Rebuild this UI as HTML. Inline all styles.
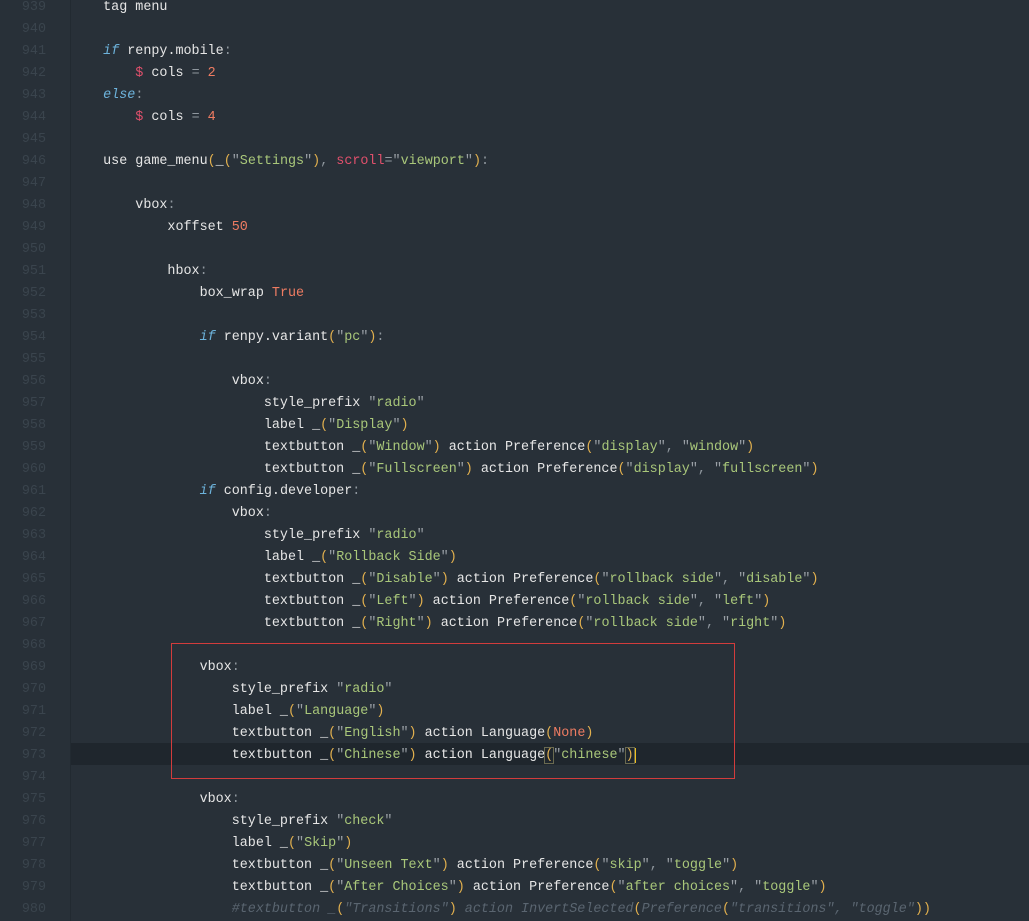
<!DOCTYPE html><html><head><style>
body{margin:0;width:1029px;height:921px;background:#283038;overflow:hidden;position:relative;font-family:"Liberation Mono",monospace;font-size:13.4px;}
.l{position:absolute;left:0;height:22px;line-height:22px;width:1029px;white-space:pre;color:#e6e6e6}
.n{position:absolute;left:0;width:46px;text-align:right;color:#3a444d}
.t{position:absolute;left:71px}
.k{color:#6db3dc;font-style:italic}.s{color:#a9c77a}.q{color:#9aa0a6}.p{color:#e2b04e}.m{color:#ef7c62}.d{color:#e0506c}.c{color:#5a6570;font-style:italic}.g{color:#8f979e}
</style></head><body>
<div style="position:absolute;left:70px;top:0;width:1px;height:921px;background:#222a31"></div>
<div style="position:absolute;left:71px;top:743px;width:958px;height:22px;background:#1f262d"></div>
<div style="position:absolute;left:171px;top:643px;width:562px;height:134px;border:1px solid #d23c3c"></div>
<div style="position:absolute;left:0;top:2px">
<div class="l" style="top:-5px"><span class="n">939</span><span class="t">    tag menu</span></div>
<div class="l" style="top:17px"><span class="n">940</span></div>
<div class="l" style="top:39px"><span class="n">941</span><span class="t">    <span class="k">if</span> renpy.mobile<span class="g">:</span></span></div>
<div class="l" style="top:61px"><span class="n">942</span><span class="t">        <span class="d">$</span> cols <span class="g">=</span> <span class="m">2</span></span></div>
<div class="l" style="top:83px"><span class="n">943</span><span class="t">    <span class="k">else</span><span class="g">:</span></span></div>
<div class="l" style="top:105px"><span class="n">944</span><span class="t">        <span class="d">$</span> cols <span class="g">=</span> <span class="m">4</span></span></div>
<div class="l" style="top:127px"><span class="n">945</span></div>
<div class="l" style="top:149px"><span class="n">946</span><span class="t">    use game_menu<span class="p">(</span>_<span class="p">(</span><span class="q">"</span><span class="s">Settings</span><span class="q">"</span><span class="p">)</span><span class="g">,</span> <span class="d">scroll</span><span class="g">=</span><span class="q">"</span><span class="s">viewport</span><span class="q">"</span><span class="p">)</span><span class="g">:</span></span></div>
<div class="l" style="top:171px"><span class="n">947</span></div>
<div class="l" style="top:193px"><span class="n">948</span><span class="t">        vbox<span class="g">:</span></span></div>
<div class="l" style="top:215px"><span class="n">949</span><span class="t">            xoffset <span class="m">50</span></span></div>
<div class="l" style="top:237px"><span class="n">950</span></div>
<div class="l" style="top:259px"><span class="n">951</span><span class="t">            hbox<span class="g">:</span></span></div>
<div class="l" style="top:281px"><span class="n">952</span><span class="t">                box_wrap <span class="m">True</span></span></div>
<div class="l" style="top:303px"><span class="n">953</span></div>
<div class="l" style="top:325px"><span class="n">954</span><span class="t">                <span class="k">if</span> renpy.variant<span class="p">(</span><span class="q">"</span><span class="s">pc</span><span class="q">"</span><span class="p">)</span><span class="g">:</span></span></div>
<div class="l" style="top:347px"><span class="n">955</span></div>
<div class="l" style="top:369px"><span class="n">956</span><span class="t">                    vbox<span class="g">:</span></span></div>
<div class="l" style="top:391px"><span class="n">957</span><span class="t">                        style_prefix <span class="q">"</span><span class="s">radio</span><span class="q">"</span></span></div>
<div class="l" style="top:413px"><span class="n">958</span><span class="t">                        label _<span class="p">(</span><span class="q">"</span><span class="s">Display</span><span class="q">"</span><span class="p">)</span></span></div>
<div class="l" style="top:435px"><span class="n">959</span><span class="t">                        textbutton _<span class="p">(</span><span class="q">"</span><span class="s">Window</span><span class="q">"</span><span class="p">)</span> action Preference<span class="p">(</span><span class="q">"</span><span class="s">display</span><span class="q">"</span><span class="g">,</span> <span class="q">"</span><span class="s">window</span><span class="q">"</span><span class="p">)</span></span></div>
<div class="l" style="top:457px"><span class="n">960</span><span class="t">                        textbutton _<span class="p">(</span><span class="q">"</span><span class="s">Fullscreen</span><span class="q">"</span><span class="p">)</span> action Preference<span class="p">(</span><span class="q">"</span><span class="s">display</span><span class="q">"</span><span class="g">,</span> <span class="q">"</span><span class="s">fullscreen</span><span class="q">"</span><span class="p">)</span></span></div>
<div class="l" style="top:479px"><span class="n">961</span><span class="t">                <span class="k">if</span> config.developer<span class="g">:</span></span></div>
<div class="l" style="top:501px"><span class="n">962</span><span class="t">                    vbox<span class="g">:</span></span></div>
<div class="l" style="top:523px"><span class="n">963</span><span class="t">                        style_prefix <span class="q">"</span><span class="s">radio</span><span class="q">"</span></span></div>
<div class="l" style="top:545px"><span class="n">964</span><span class="t">                        label _<span class="p">(</span><span class="q">"</span><span class="s">Rollback Side</span><span class="q">"</span><span class="p">)</span></span></div>
<div class="l" style="top:567px"><span class="n">965</span><span class="t">                        textbutton _<span class="p">(</span><span class="q">"</span><span class="s">Disable</span><span class="q">"</span><span class="p">)</span> action Preference<span class="p">(</span><span class="q">"</span><span class="s">rollback side</span><span class="q">"</span><span class="g">,</span> <span class="q">"</span><span class="s">disable</span><span class="q">"</span><span class="p">)</span></span></div>
<div class="l" style="top:589px"><span class="n">966</span><span class="t">                        textbutton _<span class="p">(</span><span class="q">"</span><span class="s">Left</span><span class="q">"</span><span class="p">)</span> action Preference<span class="p">(</span><span class="q">"</span><span class="s">rollback side</span><span class="q">"</span><span class="g">,</span> <span class="q">"</span><span class="s">left</span><span class="q">"</span><span class="p">)</span></span></div>
<div class="l" style="top:611px"><span class="n">967</span><span class="t">                        textbutton _<span class="p">(</span><span class="q">"</span><span class="s">Right</span><span class="q">"</span><span class="p">)</span> action Preference<span class="p">(</span><span class="q">"</span><span class="s">rollback side</span><span class="q">"</span><span class="g">,</span> <span class="q">"</span><span class="s">right</span><span class="q">"</span><span class="p">)</span></span></div>
<div class="l" style="top:633px"><span class="n">968</span></div>
<div class="l" style="top:655px"><span class="n">969</span><span class="t">                vbox<span class="g">:</span></span></div>
<div class="l" style="top:677px"><span class="n">970</span><span class="t">                    style_prefix <span class="q">"</span><span class="s">radio</span><span class="q">"</span></span></div>
<div class="l" style="top:699px"><span class="n">971</span><span class="t">                    label _<span class="p">(</span><span class="q">"</span><span class="s">Language</span><span class="q">"</span><span class="p">)</span></span></div>
<div class="l" style="top:721px"><span class="n">972</span><span class="t">                    textbutton _<span class="p">(</span><span class="q">"</span><span class="s">English</span><span class="q">"</span><span class="p">)</span> action Language<span class="p">(</span><span class="m">None</span><span class="p">)</span></span></div>
<div class="l" style="top:743px"><span class="n">973</span><span class="t">                    textbutton _<span class="p">(</span><span class="q">"</span><span class="s">Chinese</span><span class="q">"</span><span class="p">)</span> action Language<span class="p" style="outline:1px solid #6a6a50">(</span><span class="q">"</span><span class="s">chinese</span><span class="q">"</span><span class="p" style="outline:1px solid #6a6a50">)</span><span style="border-left:2px solid #f0c020"></span></span></div>
<div class="l" style="top:765px"><span class="n">974</span></div>
<div class="l" style="top:787px"><span class="n">975</span><span class="t">                vbox<span class="g">:</span></span></div>
<div class="l" style="top:809px"><span class="n">976</span><span class="t">                    style_prefix <span class="q">"</span><span class="s">check</span><span class="q">"</span></span></div>
<div class="l" style="top:831px"><span class="n">977</span><span class="t">                    label _<span class="p">(</span><span class="q">"</span><span class="s">Skip</span><span class="q">"</span><span class="p">)</span></span></div>
<div class="l" style="top:853px"><span class="n">978</span><span class="t">                    textbutton _<span class="p">(</span><span class="q">"</span><span class="s">Unseen Text</span><span class="q">"</span><span class="p">)</span> action Preference<span class="p">(</span><span class="q">"</span><span class="s">skip</span><span class="q">"</span><span class="g">,</span> <span class="q">"</span><span class="s">toggle</span><span class="q">"</span><span class="p">)</span></span></div>
<div class="l" style="top:875px"><span class="n">979</span><span class="t">                    textbutton _<span class="p">(</span><span class="q">"</span><span class="s">After Choices</span><span class="q">"</span><span class="p">)</span> action Preference<span class="p">(</span><span class="q">"</span><span class="s">after choices</span><span class="q">"</span><span class="g">,</span> <span class="q">"</span><span class="s">toggle</span><span class="q">"</span><span class="p">)</span></span></div>
<div class="l" style="top:897px"><span class="n">980</span><span class="t">                    <span class="c">#textbutton _</span><span class="p">(</span><span class="c">"Transitions"</span><span class="p">)</span><span class="c"> action InvertSelected</span><span class="p">(</span><span class="c">Preference</span><span class="p">(</span><span class="c">"transitions", "toggle"</span><span class="p">))</span></span></div>
</div>
</body></html>
